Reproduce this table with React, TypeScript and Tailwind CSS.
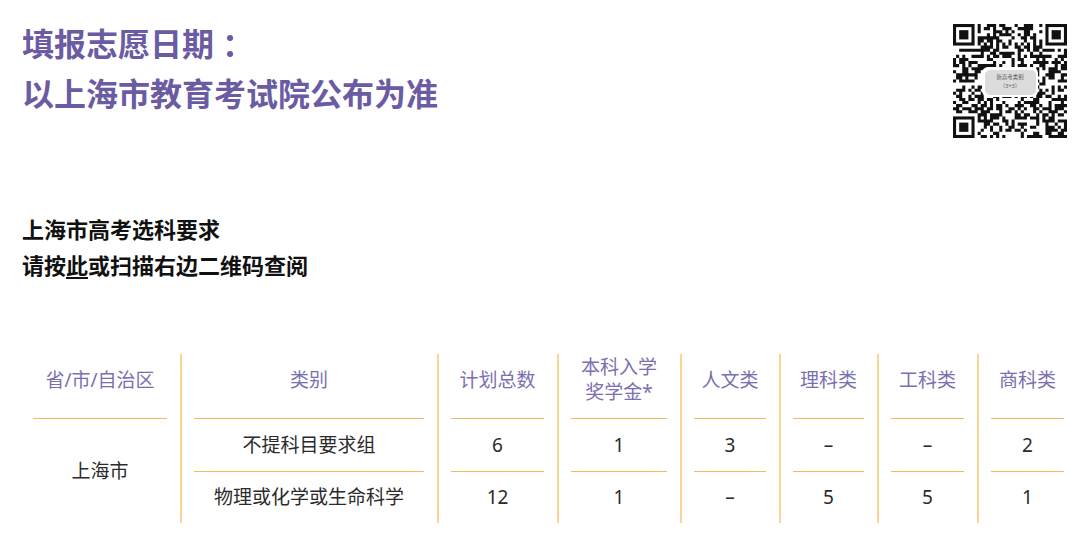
import React from "react";

const font = { fontFamily: '"Noto Sans", "Noto Sans CJK SC", sans-serif' };

// deterministic pseudo random matrix for the QR drawing
function qrCells(n: number) {
  let seed = 20240613;
  const rnd = () => {
    seed = (seed * 1103515245 + 12345) & 0x7fffffff;
    return seed / 0x7fffffff;
  };
  const cells: [number, number][] = [];
  const inFinder = (x: number, y: number) =>
    (x < 8 && y < 8) || (x >= n - 8 && y < 8) || (x < 8 && y >= n - 8);
  for (let y = 0; y < n; y++) {
    for (let x = 0; x < n; x++) {
      if (inFinder(x, y)) continue;
      if (y === 6) {
        if (x % 2 === 0) cells.push([x, y]);
        continue;
      }
      if (x === 6) {
        if (y % 2 === 0) cells.push([x, y]);
        continue;
      }
      if (rnd() < 0.5) cells.push([x, y]);
    }
  }
  return cells;
}

function Finder({ x, y }: { x: number; y: number }) {
  return (
    <g>
      <rect x={x} y={y} width={7} height={7} fill="#111" />
      <rect x={x + 1} y={y + 1} width={5} height={5} fill="#fff" />
      <rect x={x + 2} y={y + 2} width={3} height={3} fill="#111" />
    </g>
  );
}

function QrCode() {
  const n = 37;
  const cells = qrCells(n);
  const d = cells.map(([x, y]) => `M${x} ${y}h1v1h-1z`).join("");
  return (
    <div className="relative w-[114px] h-[114px]">
      <svg viewBox={`0 0 ${n} ${n}`} width={114} height={114}>
        <rect width={n} height={n} fill="#fff" />
        <path d={d} fill="#111" />
        <Finder x={0} y={0} />
        <Finder x={n - 7} y={0} />
        <Finder x={0} y={n - 7} />
      </svg>
      <div className="absolute left-[29px] top-[43px] w-[56px] h-[30px] bg-white rounded-[6px] flex items-center justify-center">
        <div className="w-[51px] h-[25px] bg-[#dcdcdc] rounded-[5px] flex flex-col items-center justify-center text-[#555] text-[5.5px] leading-[9px]">
          <span>新高考类别</span>
          <span>（3+3）</span>
        </div>
      </div>
    </div>
  );
}

type Col = {
  cls: string;
  head: React.ReactNode;
  r1: string;
  r2?: string;
};

const cols: Col[] = [
  { cls: "w-[160px] px-[13px]", head: "省/市/自治区", r1: "上海市" },
  { cls: "w-[257px] pl-[12px] pr-[13px] border-l-2", head: "类别", r1: "不提科目要求组", r2: "物理或化学或生命科学" },
  { cls: "w-[120px] pl-[12px] pr-[13px] border-l-2", head: "计划总数", r1: "6", r2: "12" },
  {
    cls: "w-[123px] pl-[12px] pr-[13px] border-l-2",
    head: (
      <>
        本科入学
        <br />
        奖学金*
      </>
    ),
    r1: "1",
    r2: "1",
  },
  { cls: "w-[99px] pl-[12px] pr-[13px] border-l-2", head: "人文类", r1: "3", r2: "–" },
  { cls: "w-[98px] pl-[12px] pr-[13px] border-l-2", head: "理科类", r1: "–", r2: "5" },
  { cls: "w-[100px] pl-[12px] pr-[13px] border-l-2", head: "工科类", r1: "–", r2: "5" },
  { cls: "w-[100px] pl-[12px] pr-[13px] border-l-2", head: "商科类", r1: "2", r2: "1" },
];

function Table() {
  return (
    <div className="flex pl-[20px] text-[19px]">
      {cols.map((c, i) => (
        <div key={i} className={`flex flex-col border-l-[#fcd595] ${c.cls}`}>
          <div className="h-[65px] pb-3 flex items-center justify-center text-center leading-[25px] text-[#7a70b0] border-b border-b-[#f4ba5c]">
            <span>{c.head}</span>
          </div>
          {c.r2 === undefined ? (
            <div className="h-[104px] flex items-center justify-center text-[#2b2b2b]">{c.r1}</div>
          ) : (
            <>
              <div className="h-[53px] flex items-center justify-center text-[#2b2b2b] border-b border-b-[#f4ba5c]">
                {c.r1}
              </div>
              <div className="h-[51px] flex items-center justify-center text-[#2b2b2b]">{c.r2}</div>
            </>
          )}
        </div>
      ))}
    </div>
  );
}

export default function App() {
  return (
    <div className="w-[1080px] h-[534px] bg-white overflow-hidden" style={font}>
      <div className="flex justify-between items-start">
        <div className="pl-[22px] pt-[19px]">
          <h1 className="text-[32px] leading-[50px] font-bold text-[#6a5ba3]">
            填报志愿日期<span className="ml-[8px]">：</span>
            <br />
            以上海市教育考试院公布为准
          </h1>
          <div className="mt-[92px] text-[22px] leading-[36px] font-bold text-[#111]">
            <p>上海市高考选科要求</p>
            <p>
              请按<span className="underline underline-offset-[3px]">此</span>或扫描右边二维码查阅
            </p>
          </div>
        </div>
        <div className="mt-[24px] mr-[13px]">
          <QrCode />
        </div>
      </div>
      <div className="mt-[71px]">
        <Table />
      </div>
    </div>
  );
}
